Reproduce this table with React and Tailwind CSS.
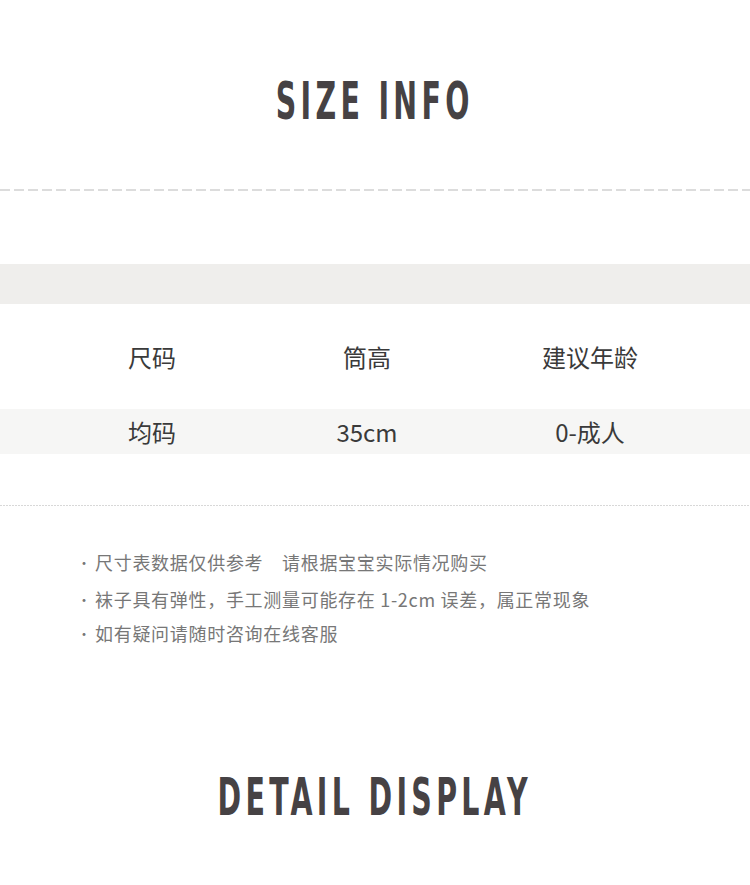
import React from 'react';

const cjk = "font-['Noto_Sans_CJK_SC','Noto_Sans',sans-serif]";

function Heading({ children, className = '' }) {
    return (
        <div className={`flex justify-center h-[52px] ${className}`}>
            <span className="inline-block font-['DejaVu_Sans_Condensed','DejaVu_Sans',sans-serif] font-bold text-[51px] leading-[52px] tracking-[7px] text-[#464244] scale-x-[0.62] whitespace-nowrap">
                {children}
            </span>
        </div>
    );
}

const notes = [
    { text: '尺寸表数据仅供参考　请根据宝宝实际情况购买', mt: 'mt-[44px]' },
    { text: '袜子具有弹性，手工测量可能存在 1-2cm 误差，属正常现象', mt: 'mt-[13px]' },
    { text: '如有疑问请随时咨询在线客服', mt: 'mt-[10px]' },
];

export default function App() {
    return (
        <div className={`w-[750px] h-[885px] bg-white overflow-hidden ${cjk}`}>
            <Heading className="mt-[76px]">SIZE INFO</Heading>

            <div className="mt-[61px] h-[2px] bg-[repeating-linear-gradient(90deg,#dcdcdc_0_10px,transparent_10px_14px)]" />

            <div className="mt-[73px] h-[40px] bg-[#efeeec]" />

            <div className="grid grid-cols-[304px_126px_1fr] h-[105px] items-center text-[24px] text-[#3a3a3a]">
                <div className="text-center">尺码</div>
                <div className="text-center">筒高</div>
                <div className="text-center">建议年龄</div>
            </div>

            <div className="grid grid-cols-[304px_126px_1fr] h-[45px] items-center bg-[#f6f6f5] text-[24px] text-[#3a3a3a]">
                <div className="text-center">均码</div>
                <div className="text-center">35cm</div>
                <div className="text-center">0-成人</div>
            </div>

            <div className="mt-[51px] h-px bg-[repeating-linear-gradient(90deg,#d8d8d8_0_2px,transparent_2px_3px)]" />

            <div className="pl-[77px] text-[18px] leading-[24px] tracking-[0.7px] text-[#777]">
                {notes.map((n) => (
                    <div key={n.text} className={`flex items-center whitespace-pre ${n.mt}`}>
                        <span className="w-[18px] shrink-0 text-[14px] leading-[24px] tracking-normal">·</span>
                        <span>{n.text}</span>
                    </div>
                ))}
            </div>

            <Heading className="mt-[127px]">DETAIL DISPLAY</Heading>
        </div>
    );
}
